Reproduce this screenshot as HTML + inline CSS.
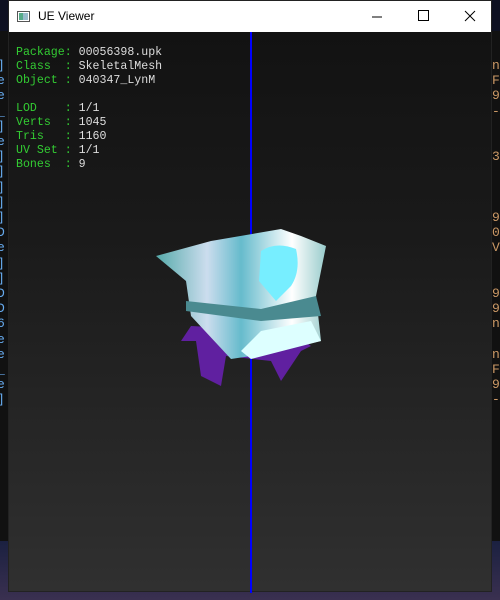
<!DOCTYPE html>
<html><head><style>
body{margin:0;width:500px;height:600px;overflow:hidden;background:linear-gradient(#0d1020 0%,#1a2040 90%,#3a3050 100%);position:relative;font-family:"Liberation Sans",sans-serif}
.bg{position:absolute;left:0;top:31px;width:500px;height:510px;background:#111}
.win{position:absolute;left:8px;top:0;width:484px;height:592px;border:1px solid #222;box-sizing:border-box;background:linear-gradient(#111 0%,#1a1a1a 40%,#303030 100%)}
.tb{position:absolute;left:0;top:0;width:100%;height:31px;background:#fff}
.tb .t{position:absolute;left:29px;top:8px;font-size:12px;color:#000}
.info{position:absolute;left:7px;top:45px;font-family:"Liberation Mono",monospace;font-size:11.6px;line-height:14px;color:#3c3;white-space:pre}
.info b{font-weight:normal;color:#ddd}
.side{position:absolute;font-family:"Liberation Mono",monospace;font-size:13px;line-height:15.2px;color:#c96;white-space:pre}
</style></head><body>
<div class="bg"></div>
<div class="side" style="left:-3px;top:58px;color:#6ae">]
e
e
_
]
e
]
]
]
]
]
D
e
]
]
D
D
6
e
e
_
e
]</div>
<div class="side" style="left:492px;top:58px">n
F
9
-


3



9
0
V


9
9
n

n
F
9
-</div>
<div class="win">
<div class="tb"><svg style="position:absolute;left:8px;top:10px" width="13" height="11"><rect x=".5" y=".5" width="12" height="10" fill="#fff" stroke="#555"/><rect x="2" y="2" width="4" height="7" fill="#5a8"/><rect x="6" y="2" width="5" height="7" fill="#9bc"/></svg><span class="t">UE Viewer</span>
<svg style="position:absolute;left:362px;top:10px" width="12" height="12"><line x1="1" y1="6" x2="11" y2="6" stroke="#000"/></svg>
<svg style="position:absolute;left:409px;top:9px" width="12" height="12"><rect x=".5" y=".5" width="10" height="10" fill="none" stroke="#000"/></svg>
<svg style="position:absolute;left:455px;top:9px" width="12" height="12"><path d="M1 1L11 11M11 1L1 11" stroke="#000"/></svg>
</div>
<div style="position:absolute;left:241px;top:31px;width:2px;height:561px;background:#00f"></div>
<div class="info">Package: <b>00056398.upk</b>
Class  : <b>SkeletalMesh</b>
Object : <b>040347_LynM</b>

LOD    : <b>1/1</b>
Verts  : <b>1045</b>
Tris   : <b>1160</b>
UV Set : <b>1/1</b>
Bones  : <b>9</b></div>
<svg style="position:absolute;left:142px;top:200px" width="200" height="200">
<defs><linearGradient id="g" x1="0" x2="1"><stop offset="0" stop-color="#5aa"/><stop offset=".3" stop-color="#cde"/><stop offset=".5" stop-color="#6bc"/><stop offset=".8" stop-color="#fff"/><stop offset="1" stop-color="#9cc"/></linearGradient></defs>
<path d="M40 125L30 140L45 140L50 175L70 185L75 155L120 160L130 180L150 150L160 145L140 130Z" fill="#6020a0"/>
<path d="M5 55L60 40L130 28L150 35L175 45L165 95L170 140L100 155L80 158L40 115L35 80Z" fill="url(#g)"/>
<path d="M35 100L110 108L165 95L170 115L110 120L35 110Z" fill="#4a8a90"/>
<path d="M110 50Q125 40 145 48Q150 70 140 85L125 100L108 80Z" fill="#7ef"/>
<path d="M90 150L110 130L160 120L170 140L100 158Z" fill="#dff"/>
</svg>
</div>
</body></html>
